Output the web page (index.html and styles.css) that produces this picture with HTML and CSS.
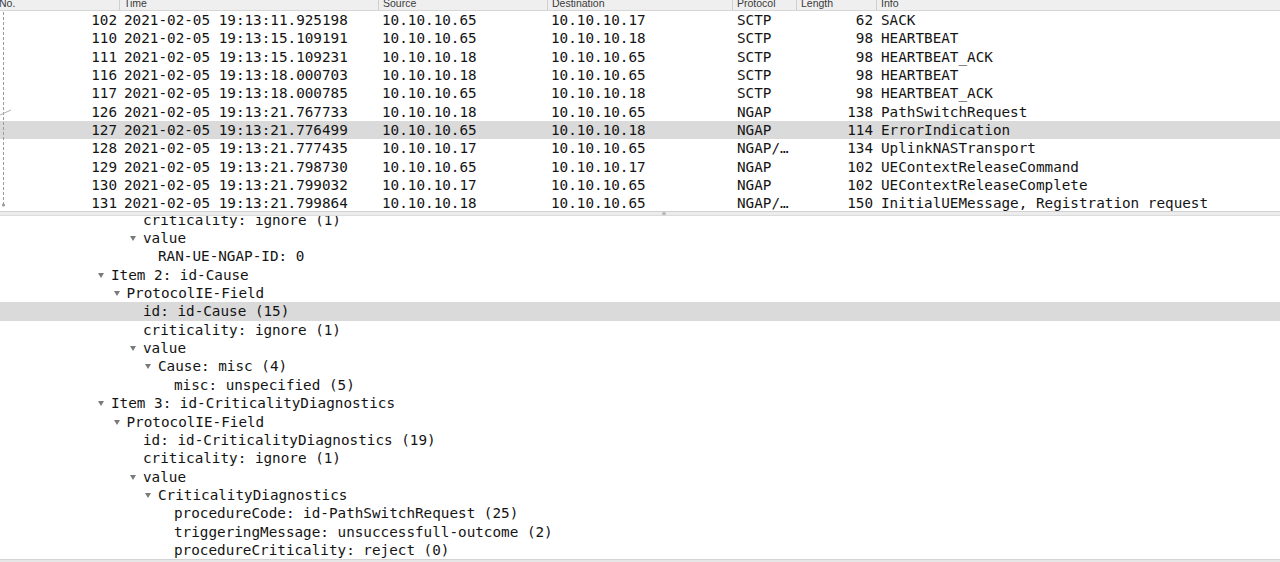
FILE: index.html
```html
<!DOCTYPE html>
<html>
<head>
<meta charset="utf-8">
<link rel="stylesheet" href="styles.css">
</head>
<body>
<div class="app">
  <div class="list">
    <div class="hdr">
      <div class="hc c-no">No.</div>
      <div class="hc c-time">Time</div>
      <div class="hc">Source</div>
      <div class="hc">Destination</div>
      <div class="hc">Protocol</div>
      <div class="hc">Length</div>
      <div class="hc">Info</div>
    </div>
    <div class="rows">
      <svg class="rel" width="14" height="202" viewBox="0 0 14 202">
        <line x1="3.5" y1="1" x2="3.5" y2="194" stroke="#9a9a9a" stroke-width="1" stroke-dasharray="3 2"/>
        <line x1="0" y1="104" x2="11" y2="99" stroke="#b0b0b0" stroke-width="1"/>
        <circle cx="3.5" cy="194" r="1.6" fill="#9a9a9a"/>
      </svg>
      <div class="row"><span class="r">102</span><span>2021-02-05 19:13:11.925198</span><span>10.10.10.65</span><span>10.10.10.17</span><span>SCTP</span><span class="r">62</span><span>SACK</span></div>
      <div class="row"><span class="r">110</span><span>2021-02-05 19:13:15.109191</span><span>10.10.10.65</span><span>10.10.10.18</span><span>SCTP</span><span class="r">98</span><span>HEARTBEAT</span></div>
      <div class="row"><span class="r">111</span><span>2021-02-05 19:13:15.109231</span><span>10.10.10.18</span><span>10.10.10.65</span><span>SCTP</span><span class="r">98</span><span>HEARTBEAT_ACK</span></div>
      <div class="row"><span class="r">116</span><span>2021-02-05 19:13:18.000703</span><span>10.10.10.18</span><span>10.10.10.65</span><span>SCTP</span><span class="r">98</span><span>HEARTBEAT</span></div>
      <div class="row"><span class="r">117</span><span>2021-02-05 19:13:18.000785</span><span>10.10.10.65</span><span>10.10.10.18</span><span>SCTP</span><span class="r">98</span><span>HEARTBEAT_ACK</span></div>
      <div class="row"><span class="r">126</span><span>2021-02-05 19:13:21.767733</span><span>10.10.10.18</span><span>10.10.10.65</span><span>NGAP</span><span class="r">138</span><span>PathSwitchRequest</span></div>
      <div class="row sel"><span class="r">127</span><span>2021-02-05 19:13:21.776499</span><span>10.10.10.65</span><span>10.10.10.18</span><span>NGAP</span><span class="r">114</span><span>ErrorIndication</span></div>
      <div class="row"><span class="r">128</span><span>2021-02-05 19:13:21.777435</span><span>10.10.10.17</span><span>10.10.10.65</span><span>NGAP/…</span><span class="r">134</span><span>UplinkNASTransport</span></div>
      <div class="row"><span class="r">129</span><span>2021-02-05 19:13:21.798730</span><span>10.10.10.65</span><span>10.10.10.17</span><span>NGAP</span><span class="r">102</span><span>UEContextReleaseCommand</span></div>
      <div class="row"><span class="r">130</span><span>2021-02-05 19:13:21.799032</span><span>10.10.10.17</span><span>10.10.10.65</span><span>NGAP</span><span class="r">102</span><span>UEContextReleaseComplete</span></div>
      <div class="row"><span class="r">131</span><span>2021-02-05 19:13:21.799864</span><span>10.10.10.18</span><span>10.10.10.65</span><span>NGAP/…</span><span class="r">150</span><span>InitialUEMessage, Registration request</span></div>
    </div>
  </div>
  <div class="split"><span class="knob"></span></div>
  <div class="tree">
    <div class="tree-in">
      <div class="node l2"><span class="tw"></span>criticality: ignore (1)</div>
      <div class="node l2"><span class="tw open"></span>value</div>
      <div class="node l3"><span class="tw"></span>RAN-UE-NGAP-ID: 0</div>
      <div class="node l0"><span class="tw open"></span>Item 2: id-Cause</div>
      <div class="node l1"><span class="tw open"></span>ProtocolIE-Field</div>
      <div class="node l2 sel"><span class="tw"></span>id: id-Cause (15)</div>
      <div class="node l2"><span class="tw"></span>criticality: ignore (1)</div>
      <div class="node l2"><span class="tw open"></span>value</div>
      <div class="node l3"><span class="tw open"></span>Cause: misc (4)</div>
      <div class="node l4"><span class="tw"></span>misc: unspecified (5)</div>
      <div class="node l0"><span class="tw open"></span>Item 3: id-CriticalityDiagnostics</div>
      <div class="node l1"><span class="tw open"></span>ProtocolIE-Field</div>
      <div class="node l2"><span class="tw"></span>id: id-CriticalityDiagnostics (19)</div>
      <div class="node l2"><span class="tw"></span>criticality: ignore (1)</div>
      <div class="node l2"><span class="tw open"></span>value</div>
      <div class="node l3"><span class="tw open"></span>CriticalityDiagnostics</div>
      <div class="node l4"><span class="tw"></span>procedureCode: id-PathSwitchRequest (25)</div>
      <div class="node l4"><span class="tw"></span>triggeringMessage: unsuccessfull-outcome (2)</div>
      <div class="node l4"><span class="tw"></span>procedureCriticality: reject (0)</div>
    </div>
  </div>
  <div class="foot"></div>
</div>
</body>
</html>
```
FILE: styles.css
```css
html, body {
  margin: 0;
  padding: 0;
  background: #ffffff;
  overflow: hidden;
}
.app {
  width: 1280px;
  height: 562px;
  display: flex;
  flex-direction: column;
  overflow: hidden;
  color: #141414;
}
.list {
  height: 211px;
  flex: none;
  overflow: hidden;
}
.hdr {
  height: 9.8px;
  border-bottom: 1px solid #d6d6d6;
  background: #efefef;
  display: grid;
  grid-template-columns: 119px 259px 169px 185px 64px 80px 1fr;
  overflow: hidden;
  font-family: "Liberation Sans", Arial, sans-serif;
  font-size: 10.5px;
  line-height: 7.5px;
  color: #3a3a3a;
}
.hc {
  padding-left: 4px;
  border-left: 1px solid #cfcfcf;
  white-space: nowrap;
}
.hc.c-no {
  padding-left: 0;
  margin-left: -1px;
  border-left: none;
}
.rows {
  position: relative;
  font-family: "DejaVu Sans Mono", Menlo, monospace;
  font-size: 14.3px;
  line-height: 18.37px;
}
.rel {
  position: absolute;
  left: 0;
  top: 0;
}
.row {
  display: grid;
  grid-template-columns: 119px 259px 169px 185px 64px 80px 1fr;
  height: 18.37px;
  white-space: nowrap;
}
.row > span {
  padding-left: 5px;
  overflow: hidden;
}
.row > span:nth-child(3),
.row > span:nth-child(4) {
  padding-left: 4px;
}
.row > span.r {
  text-align: right;
  padding-left: 0;
  padding-right: 3px;
}
.row > span:first-child {
  padding-right: 2px;
}
.sel {
  background: #dadada;
}
.split {
  height: 3px;
  flex: none;
  background: #ececec;
  border-top: 1px solid #d2d2d2;
  border-bottom: 1px solid #dcdcdc;
  position: relative;
}
.knob {
  position: absolute;
  left: 662px;
  top: 0;
  width: 4px;
  height: 3px;
  border-radius: 2px;
  background: #b8b8b8;
}
.tree {
  flex: 1;
  overflow: hidden;
  font-family: "DejaVu Sans Mono", Menlo, monospace;
  font-size: 14.3px;
  line-height: 18.37px;
}
.tree-in {
  margin-top: -5.4px;
}
.node {
  height: 18.37px;
  display: flex;
  align-items: center;
  white-space: nowrap;
}
.tw {
  width: 13px;
  flex: none;
  height: 18.37px;
  position: relative;
}
.tw.open::before {
  content: "";
  position: absolute;
  left: 0;
  top: 7px;
  border-left: 3px solid transparent;
  border-right: 3px solid transparent;
  border-top: 5px solid #7a7a7a;
}
.l0 { padding-left: 98px; }
.l1 { padding-left: 113.5px; }
.l2 { padding-left: 130px; }
.l3 { padding-left: 145px; }
.l4 { padding-left: 161px; }
.foot {
  height: 2px;
  flex: none;
  background: #e6e6e6;
  border-top: 1px solid #d4d4d4;
}
```
